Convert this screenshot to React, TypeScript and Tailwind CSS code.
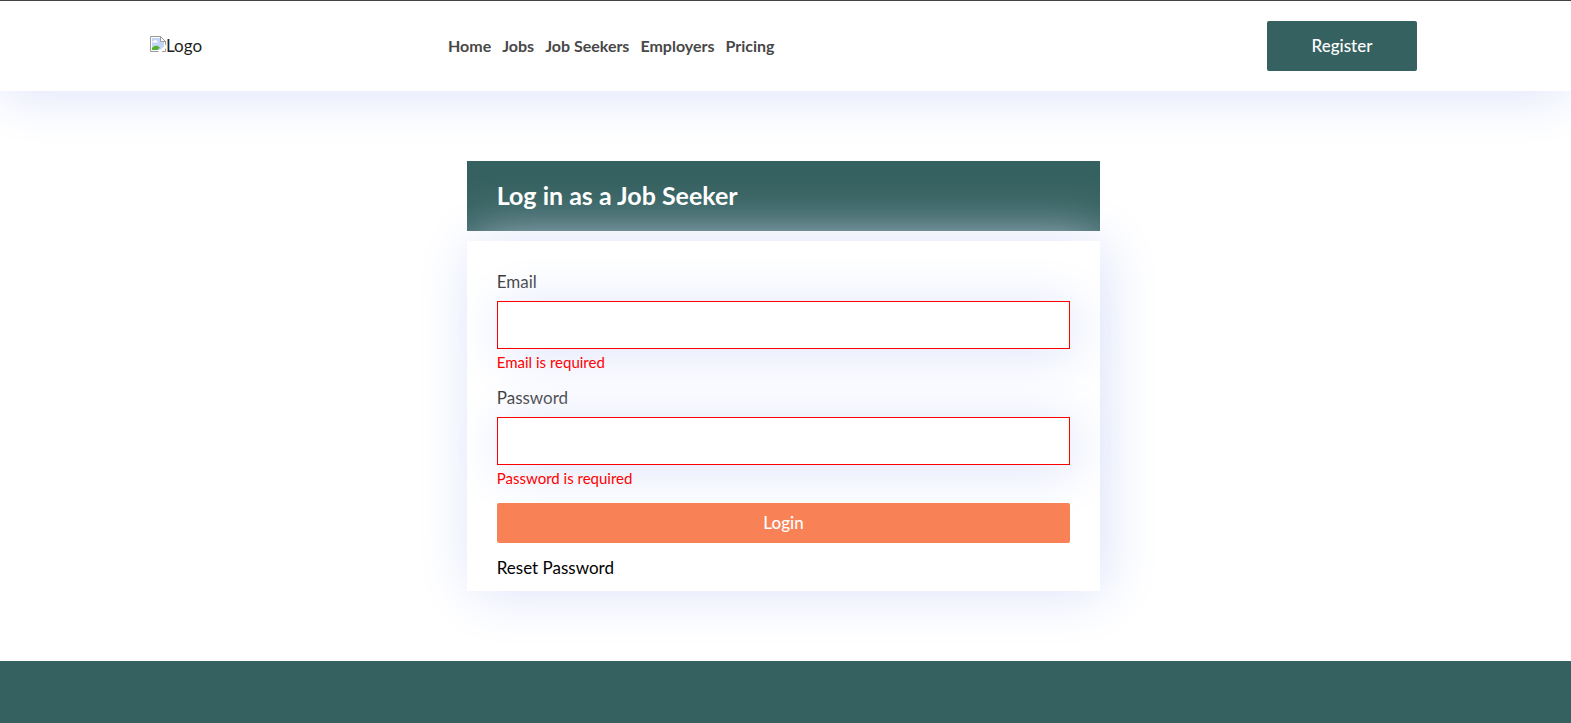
import { useState } from 'react';

const links = ['Home', 'Jobs', 'Job Seekers', 'Employers', 'Pricing'];

function BrokenImageIcon() {
  return (
    <svg className="size-4 shrink-0" viewBox="0 0 16 16" aria-hidden="true">
      <path d="M.5.5h10l5 5v10H.5z" fill="#fff" stroke="#9a9a9a" />
      <path d="M2 2h8v4h4v8H2z" fill="#c3d6f7" />
      <path d="M2.500 6.500a1.200 1.200 0 0 1 1.200-1.600 1.600 1.600 0 0 1 3 .2 1 1 0 0 1 .8 1.400z" fill="#fff" />
      <path d="M2 14v-2c1.500-1.800 3-2.500 4.500-2.300 1.700.1 2.700 1.200 3.300 2L7.500 14z" fill="#55b030" />
      <path d="M10.500.5v5h5z" fill="#fff" stroke="#9a9a9a" />
      <path d="M16 8.500 8 16h3.500L16 12.200z" fill="#fff" />
    </svg>
  );
}

function Header() {
  return (
    <header className="border-t border-[#444] bg-white shadow-[0_4px_54px_#dce2fa]">
      <div className="flex items-center py-5 pr-[154px] pl-[150px]">
        <a href="#" className="flex w-[298px] items-start text-[17px] leading-5 text-[#222]">
          <BrokenImageIcon />
          Logo
        </a>
        <nav className="flex grow gap-[11px] text-base font-bold text-[#484848]">
          {links.map((label) => (
            <a key={label} href="#">
              {label}
            </a>
          ))}
        </nav>
        <button type="button" className="h-[50px] w-[150px] rounded-xs bg-[#356160] text-[17px] font-medium text-white">
          Register
        </button>
      </div>
    </header>
  );
}

type FieldProps = {
  id: string;
  label: string;
  type: string;
  value: string;
  onChange: (value: string) => void;
};

function Field({ id, label, type, value, onChange }: FieldProps) {
  return (
    <div className="flex flex-col">
      <label htmlFor={id} className="mb-[7px] text-[17px] leading-6 text-[#333]">
        {label}
      </label>
      <input
        id={id}
        type={type}
        value={value}
        onChange={(event) => onChange(event.target.value)}
        aria-describedby={`${id}-error`}
        className="h-12 w-full border border-[#f00] bg-white px-4 text-base shadow-[5px_5px_54px_#dce2fa] outline-none"
      />
      <p id={`${id}-error`} className="mt-1 text-[15px] leading-[18px] text-[#f00]">
        {label} is required
      </p>
    </div>
  );
}

export default function App() {
  const [email, setEmail] = useState('');
  const [password, setPassword] = useState('');

  return (
    <div className="flex min-h-screen flex-col bg-white font-['Lato',sans-serif]">
      <Header />
      <main className="grid grid-cols-4 py-[70px] pr-[154px] pl-[150px]">
        <div className="col-span-2 col-start-2">
          <h1 className="mb-[10px] flex h-[70px] items-center bg-[#356160] px-[30px] text-[25px] font-bold text-white">
            Log in as a Job Seeker
          </h1>
          <form
            onSubmit={(event) => event.preventDefault()}
            className="flex flex-col bg-white px-[30px] pt-[29px] pb-[11px] shadow-[5px_2px_54px_#dce2fa]"
          >
            <div className="flex flex-col gap-[15px]">
              <Field id="email" label="Email" type="email" value={email} onChange={setEmail} />
              <Field id="password" label="Password" type="password" value={password} onChange={setPassword} />
            </div>
            <button type="submit" className="mt-4 h-10 rounded-xs bg-[#f88256] text-[17px] font-medium text-white">
              Login
            </button>
            <a href="#" className="mt-[13px] self-start text-[17px] leading-6 text-black">
              Reset Password
            </a>
          </form>
        </div>
      </main>
      <footer className="grow bg-[#356160]" />
    </div>
  );
}
